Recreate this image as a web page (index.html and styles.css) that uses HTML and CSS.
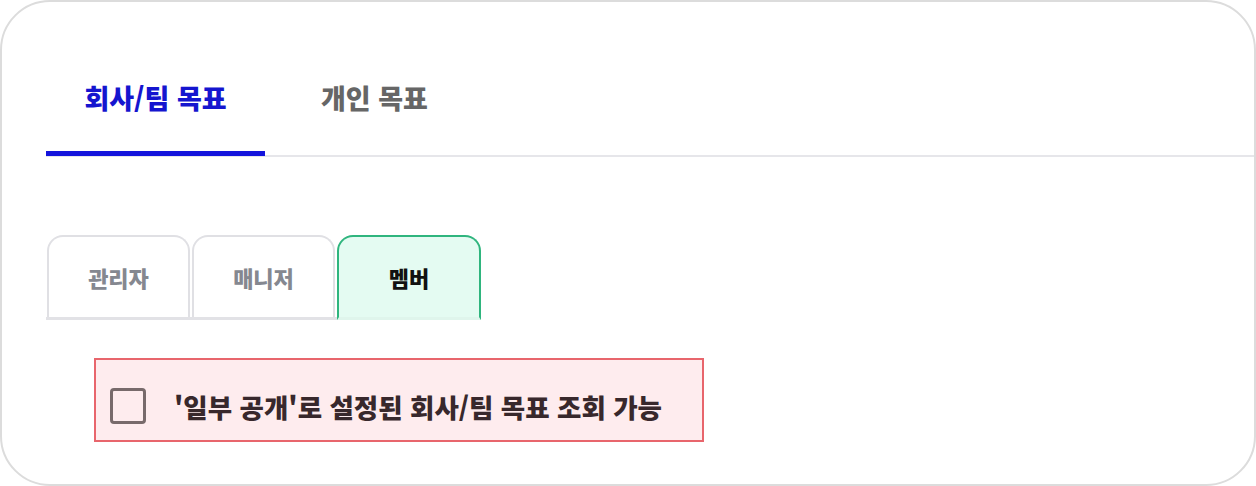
FILE: index.html
```html
<!DOCTYPE html>
<html lang="ko">
<head>
<meta charset="utf-8">
<link rel="stylesheet" href="styles.css">
</head>
<body>
<div class="card">
  <div class="main-tabs">
    <div class="main-tab active">회사/팀 목표</div>
    <div class="main-tab">개인 목표</div>
  </div>
  <div class="role-tabs">
    <div class="role-tab">관리자</div>
    <div class="role-tab">매니저</div>
    <div class="role-tab active">멤버</div>
  </div>
  <label class="option">
    <span class="checkbox"></span>
    <span class="option-text">'일부 공개'로 설정된 회사/팀 목표 조회 가능</span>
  </label>
</div>
</body>
</html>
```
FILE: styles.css
```css
* { box-sizing: border-box; }
html, body { margin: 0; padding: 0; background: #fff; }
body {
  font-family: "Noto Sans CJK KR", "Noto Sans", sans-serif;
  width: 1256px;
  height: 486px;
}
.card {
  width: 1256px;
  height: 486px;
  border: 2px solid #dcdcdc;
  border-radius: 50px;
  padding: 39px 0 0 44px;
  display: flex;
  flex-direction: column;
  align-items: flex-start;
  overflow: hidden;
}
.main-tabs {
  display: flex;
  align-self: stretch;
  border-bottom: 2px solid #e6e6ea;
}
.main-tab {
  width: 219px;
  height: 115px;
  display: flex;
  align-items: center;
  justify-content: center;
  font-size: 27px;
  font-weight: 900;
  color: #666666;
  padding-top: 3px;
  border-bottom: 5px solid transparent;
  margin-bottom: -1px;
}
.main-tab.active {
  color: #1515cf;
  border-bottom-color: #1414dc;
}
.role-tabs {
  display: flex;
  gap: 2px;
  margin-top: 78px;
  border-bottom: 3px solid #e2e2e6;
  padding-left: 1px;
}
.role-tab {
  width: 143px;
  height: 82px;
  border: 2px solid #e0e0e4;
  border-bottom: none;
  border-radius: 16px 16px 0 0;
  display: flex;
  align-items: center;
  justify-content: center;
  font-size: 22px;
  font-weight: 900;
  color: #858890;
}
.role-tab.active {
  width: 144px;
  border-color: #2fb57e;
  background: #e4fbf2;
  color: #111111;
  margin-bottom: -3px;
  height: 85px;
  border-bottom: 3px solid #dff5ec;
}
.option {
  margin-top: 38px;
  margin-left: 48px;
  width: 610px;
  height: 84px;
  border: 2px solid #e8656c;
  background: #feecee;
  display: flex;
  align-items: center;
  padding-left: 14px;
  padding-top: 12px;
  gap: 28px;
}
.checkbox {
  width: 36px;
  height: 36px;
  border: 3px solid #786a6b;
  border-radius: 4px;
  background: transparent;
  flex: none;
}
.option-text {
  font-size: 26.5px;
  font-weight: 900;
  color: #38282c;
}
```
